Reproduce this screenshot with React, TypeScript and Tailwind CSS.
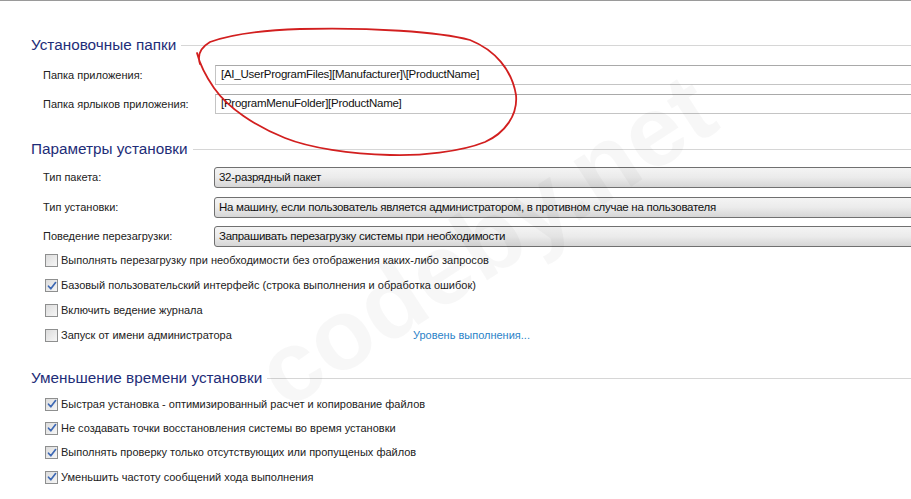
import React from 'react';

const font = { fontFamily: '"Liberation Sans", Arial, sans-serif' };

function SectionHeader({ title, className = '' }: { title: string; className?: string }) {
  return (
    <div className={`flex items-center h-[22px] ${className}`}>
      <span className="pl-[31px] pr-[5px] text-[15.3px] text-[#1e2d78] leading-none whitespace-nowrap">{title}</span>
      <div className="flex-1 h-px bg-[#d6d6d6]" />
    </div>
  );
}

function TextField({ label, value, className = '' }: { label: string; value: string; className?: string }) {
  return (
    <div className={`flex items-center h-[20px] ${className}`}>
      <span className="w-[215px] shrink-0 pl-[43px] text-[11px] text-[#222]">{label}</span>
      <div className="flex-1 -mr-2 h-full flex items-center border border-[#c4c4c4] border-t-[#a9a9a9] bg-white pl-[5px] text-[11.5px] text-[#111] tracking-[-0.25px]">
        {value}
      </div>
    </div>
  );
}

function Dropdown({ label, value, className = '' }: { label: string; value: string; className?: string }) {
  return (
    <div className={`flex items-center h-[21px] ${className}`}>
      <span className="w-[214px] shrink-0 pl-[43px] text-[11px] text-[#222]">{label}</span>
      <div className="flex-1 -mr-2 h-full flex items-center rounded-[3px] border border-[#707070] bg-gradient-to-b from-[#f4f4f4] via-[#ebebeb] to-[#d6d6d6] pl-[4px] text-[11.5px] text-[#111] tracking-[-0.28px]">
        {value}
      </div>
    </div>
  );
}

function CheckBox({ checked }: { checked: boolean }) {
  return (
    <div className="w-[13px] h-[13px] shrink-0 border border-[#8e8f8f] bg-gradient-to-br from-[#dcdcdc] to-[#f6f6f6] flex items-center justify-center">
      {checked && (
        <svg width="10" height="10" viewBox="0 0 10 10">
          <path d="M1.5 5.2 L3.8 7.8 L8.6 1.6" fill="none" stroke="#3d68b4" strokeWidth="1.7" strokeLinecap="round" strokeLinejoin="round" />
        </svg>
      )}
    </div>
  );
}

function CheckRow({ label, checked, h, extra }: { label: string; checked: boolean; h: string; extra?: React.ReactNode }) {
  return (
    <div className={`flex items-center pl-[45px] ${h}`}>
      <CheckBox checked={checked} />
      <span className="pl-[3px] text-[11px] text-[#222] whitespace-nowrap w-[355px]">{label}</span>
      {extra}
    </div>
  );
}

function RedCircle() {
  return (
    <svg className="absolute left-0 top-0 pointer-events-none" width="911" height="499" viewBox="0 0 911 499">
      <path
        d="M200 64 C197 55 200 48 210 42 C235 33 270 30 300 29 C370 27 440 32 470 40 C495 50 512 70 516 95 C518 115 505 133 485 142 C460 152 420 156 390 155 C350 154 310 148 285 138 C255 126 228 108 214 88 C205 75 200 65 197 53"
        fill="none"
        stroke="#d21f1f"
        strokeWidth="1.8"
        strokeLinecap="round"
      />
    </svg>
  );
}

export default function App() {
  return (
    <div className="relative w-[911px] h-[499px] overflow-hidden bg-white" style={font}>
      <div className="border-t border-[#9a9a9a]" />

      {/* Установочные папки */}
      <SectionHeader title="Установочные папки" className="mt-[33px]" />
      <TextField label="Папка приложения:" value="[AI_UserProgramFiles][Manufacturer]\[ProductName]" className="mt-[9px]" />
      <TextField label="Папка ярлыков приложения:" value="[ProgramMenuFolder][ProductName]" className="mt-[9px]" />

      {/* Параметры установки */}
      <SectionHeader title="Параметры установки" className="mt-[24px]" />
      <Dropdown label="Тип пакета:" value="32-разрядный пакет" className="mt-[7px]" />
      <Dropdown
        label="Тип установки:"
        value="На машину, если пользователь является администратором, в противном случае на пользователя"
        className="mt-[9px]"
      />
      <Dropdown label="Поведение перезагрузки:" value="Запрашивать перезагрузку системы при необходимости" className="mt-[8px]" />
      <div className="mt-[1px]">
        <CheckRow h="h-[25px]" checked={false} label="Выполнять перезагрузку при необходимости без отображения каких-либо запросов" />
        <CheckRow h="h-[25px]" checked label="Базовый пользовательский интерфейс (строка выполнения и обработка ошибок)" />
        <CheckRow h="h-[25px]" checked={false} label="Включить ведение журнала" />
        <CheckRow
          h="h-[25px]"
          checked={false}
          label="Запуск от имени администратора"
          extra={<span className="text-[11px] text-[#2a82c8] whitespace-nowrap">Уровень выполнения...</span>}
        />
      </div>

      {/* Уменьшение времени установки */}
      <SectionHeader title="Уменьшение времени установки" className="mt-[19px]" />
      <div className="mt-[3px]">
        <CheckRow h="h-[24px]" checked label="Быстрая установка - оптимизированный расчет и копирование файлов" />
        <CheckRow h="h-[24px]" checked label="Не создавать точки восстановления системы во время установки" />
        <CheckRow h="h-[25px]" checked label="Выполнять проверку только отсутствующих или пропущеных файлов" />
        <CheckRow h="h-[24px]" checked label="Уменьшить частоту сообщений хода выполнения" />
      </div>

      {/* watermark */}
      <div className="absolute left-[185px] top-[190px] w-[600px] text-center -rotate-[33deg] text-[100px] font-bold leading-none text-black/[0.03] pointer-events-none select-none whitespace-nowrap">
        codeby.net
      </div>

      <RedCircle />
    </div>
  );
}
